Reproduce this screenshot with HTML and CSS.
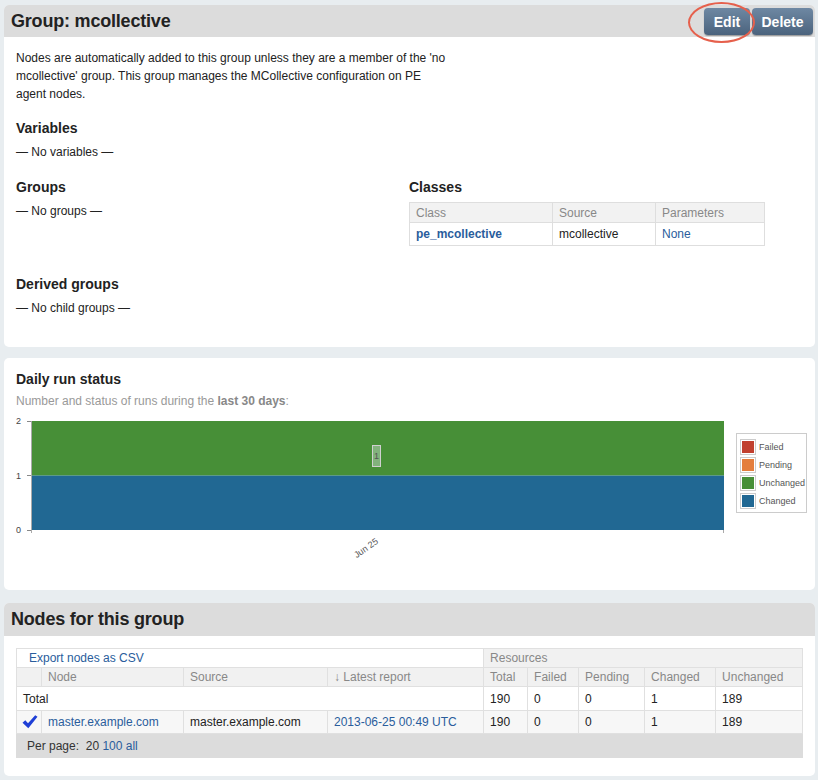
FILE: index.html
```html
<!DOCTYPE html>
<html>
<head>
<meta charset="utf-8">
<link rel="stylesheet" href="styles.css">
</head>
<body>
<section class="panel panel-group">
  <header class="panel-head">
    <h1 class="panel-title">Group: mcollective</h1>
    <div class="actions">
      <a class="btn">Edit</a>
      <a class="btn">Delete</a>
    </div>
    <span class="highlight"></span>
  </header>
  <div class="panel-body">
    <p class="desc">Nodes are automatically added to this group unless they are a member of the 'no mcollective' group. This group manages the MCollective configuration on PE agent nodes.</p>
    <h3 class="sec">Variables</h3>
    <p class="empty">— No variables —</p>
    <div class="two-col">
      <div>
        <h3 class="sec">Groups</h3>
        <p class="empty">— No groups —</p>
      </div>
      <div>
        <h3 class="sec">Classes</h3>
        <table class="classes">
          <colgroup><col class="c1"><col class="c2"><col class="c3"></colgroup>
          <thead><tr><th>Class</th><th>Source</th><th>Parameters</th></tr></thead>
          <tbody><tr><td><a class="link strong">pe_mcollective</a></td><td>mcollective</td><td><a class="link">None</a></td></tr></tbody>
        </table>
      </div>
    </div>
    <h3 class="sec derived">Derived groups</h3>
    <p class="empty">— No child groups —</p>
  </div>
</section>

<section class="panel panel-chart">
  <div class="panel-body chart-body">
    <h3 class="sec first">Daily run status</h3>
    <p class="sub">Number and status of runs during the <b>last 30 days</b>:</p>
    <svg class="chart" width="795" height="170" viewBox="0 0 795 170">
      <rect x="15" y="9" width="693" height="54.5" fill="#478f37"/>
      <rect x="15" y="63.5" width="693" height="54.5" fill="#216893"/>
      <line x1="15" y1="63.5" x2="708" y2="63.5" stroke="#5d9a88" stroke-width="1"/>
      <line x1="15.5" y1="9" x2="15.5" y2="121" stroke="#aaa" stroke-width="1"/>
      <line x1="707.5" y1="118" x2="707.5" y2="121" stroke="#aaa" stroke-width="1"/>
      <line x1="11" y1="9.5" x2="15" y2="9.5" stroke="#888"/>
      <line x1="11" y1="63.5" x2="15" y2="63.5" stroke="#888"/>
      <line x1="11" y1="118.5" x2="15" y2="118.5" stroke="#888"/>
      <text class="ylab" x="5" y="12" text-anchor="end">2</text>
      <text class="ylab" x="5" y="67" text-anchor="end">1</text>
      <text class="ylab" x="5" y="121" text-anchor="end">0</text>
      <rect x="356.5" y="33.5" width="8" height="21" fill="#82b27c" stroke="#d0d0d0" stroke-width="1"/>
      <text class="tip" x="360.5" y="47" text-anchor="middle">1</text>
      <text class="xlab" x="350" y="139" text-anchor="middle" transform="rotate(-35 350 136)">Jun 25</text>
      <rect x="720.5" y="21.5" width="70" height="79" fill="#fff" stroke="#ccc" stroke-width="1"/>
      <rect x="724.5" y="27.5" width="15" height="15" fill="#fff" stroke="#ccc"/>
      <rect x="726" y="29" width="12" height="12" fill="#c1402f"/>
      <text class="leg" x="743" y="38">Failed</text>
      <rect x="724.5" y="45.5" width="15" height="15" fill="#fff" stroke="#ccc"/>
      <rect x="726" y="47" width="12" height="12" fill="#e47e3d"/>
      <text class="leg" x="743" y="56">Pending</text>
      <rect x="724.5" y="63.5" width="15" height="15" fill="#fff" stroke="#ccc"/>
      <rect x="726" y="65" width="12" height="12" fill="#478f37"/>
      <text class="leg" x="743" y="74">Unchanged</text>
      <rect x="724.5" y="81.5" width="15" height="15" fill="#fff" stroke="#ccc"/>
      <rect x="726" y="83" width="12" height="12" fill="#216893"/>
      <text class="leg" x="743" y="92">Changed</text>
    </svg>
  </div>
</section>

<section class="panel panel-nodes">
  <header class="panel-head">
    <h1 class="panel-title">Nodes for this group</h1>
  </header>
  <div class="panel-body nodes-body">
    <table class="nodes">
      <colgroup>
        <col class="n-chk"><col class="n-node"><col class="n-src"><col class="n-rep">
        <col class="n-tot"><col class="n-fail"><col class="n-pend"><col class="n-chg"><col class="n-unch">
      </colgroup>
      <thead>
        <tr class="r-top">
          <th colspan="4" class="export"><a class="link">Export nodes as CSV</a></th>
          <th colspan="5" class="res">Resources</th>
        </tr>
        <tr class="r-head">
          <th></th><th>Node</th><th>Source</th><th>↓ Latest report</th>
          <th>Total</th><th>Failed</th><th>Pending</th><th>Changed</th><th>Unchanged</th>
        </tr>
      </thead>
      <tbody>
        <tr class="r-total">
          <td colspan="4" class="total">Total</td>
          <td>190</td><td>0</td><td>0</td><td>1</td><td>189</td>
        </tr>
        <tr class="r-node">
          <td class="chk"><svg width="16" height="14" viewBox="0 0 16 14"><path d="M0.5 7.8 L3.3 5.2 L6 8.2 L13.2 0.3 L15.5 1.8 L6.3 13.2 Z" fill="#1f3fd6"/></svg></td>
          <td><a class="link">master.example.com</a></td>
          <td>master.example.com</td>
          <td><a class="link">2013-06-25 00:49 UTC</a></td>
          <td>190</td><td>0</td><td>0</td><td>1</td><td>189</td>
        </tr>
      </tbody>
      <tfoot>
        <tr class="r-foot">
          <td colspan="9">Per page:&nbsp; 20 <a class="link">100</a> <a class="link">all</a></td>
        </tr>
      </tfoot>
    </table>
  </div>
</section>
</body>
</html>
```

FILE: styles.css
```css
* { box-sizing: border-box; }

body {
  margin: 0;
  padding: 5px 3px 0 4px;
  background: #e8edf0;
  font-family: "Liberation Sans", Arial, Helvetica, sans-serif;
  font-size: 12px;
  color: #2b2b2b;
}

.panel {
  position: relative;
  background: #fff;
  border-radius: 5px;
  width: 811px;
}

.panel-group { height: 342px; }
.panel-chart { margin-top: 11px; height: 232px; }
.panel-nodes { margin-top: 13px; height: 173px; }

.panel-head {
  position: relative;
  display: flex;
  align-items: center;
  justify-content: space-between;
  height: 32px;
  padding: 0 2px 0 7px;
  background: #dcdcdc;
  border-radius: 5px 5px 0 0;
}

.panel-nodes .panel-head { height: 33px; }

.panel-title {
  margin: 0;
  font-size: 18px;
  font-weight: bold;
  color: #222;
  letter-spacing: -0.2px;
}

.actions {
  display: flex;
  gap: 2px;
  align-self: flex-start;
  margin-top: 3px;
}

.btn {
  display: inline-flex;
  align-items: center;
  justify-content: center;
  height: 27px;
  padding: 0 8px;
  border-radius: 4px;
  background: linear-gradient(#6e88a3, #4b637d);
  color: #fff;
  font-size: 14px;
  font-weight: bold;
  box-shadow: 0 1px 1px rgba(0,0,0,0.3);
}

.actions .btn:first-child { width: 46px; }
.actions .btn:last-child { width: 61px; }

.highlight {
  position: absolute;
  left: 684px;
  top: -3px;
  width: 67px;
  height: 41px;
  border: 2px solid #e6604c;
  border-radius: 50%;
}

.panel-body { padding: 12px 12px 0 12px; }

.desc {
  margin: 0;
  width: 432px;
  line-height: 18px;
  color: #222;
}

.sec {
  margin: 16px 0 0;
  font-size: 14px;
  line-height: 18px;
  font-weight: bold;
  color: #222;
}

.sec.first { margin-top: 0; }
.sec.derived { margin-top: 29px; }

.empty {
  margin: 6px 0 0;
  line-height: 18px;
  color: #222;
}

.two-col {
  display: grid;
  grid-template-columns: 393px 355px;
  margin-top: 1px;
}

.classes {
  margin-top: 6px;
  width: 355px;
  border-collapse: collapse;
  table-layout: fixed;
}

.classes .c1 { width: 143px; }
.classes .c2 { width: 103px; }
.classes .c3 { width: 109px; }

.classes th {
  height: 20px;
  padding: 0 6px;
  text-align: left;
  font-weight: normal;
  color: #888;
  background: #f2f2f2;
  border: 1px solid #dedede;
}

.classes td {
  height: 23px;
  padding: 0 6px;
  border: 1px solid #dedede;
  color: #222;
}

.link { color: #2a5d9c; text-decoration: none; }
.strong { font-weight: bold; }

.chart-body { padding-top: 12px; }

.sub {
  margin: 4px 0 0;
  line-height: 18px;
  color: #999;
}

.sub b { color: #888; }

.chart { display: block; margin-top: 2px; }

.ylab { font-size: 9px; fill: #444; font-family: "Liberation Sans", Arial, sans-serif; }
.tip { font-size: 9px; fill: #555; font-family: "Liberation Sans", Arial, sans-serif; }
.xlab { font-size: 9px; fill: #555; font-family: "Liberation Sans", Arial, sans-serif; }
.leg { font-size: 9px; fill: #555; font-family: "Liberation Sans", Arial, sans-serif; }

.nodes-body { padding: 12px 13px 0 12px; }

.nodes {
  width: 786px;
  border-collapse: collapse;
  table-layout: fixed;
}

.n-chk { width: 25px; }
.n-node { width: 142px; }
.n-src { width: 144px; }
.n-rep { width: 156px; }
.n-tot { width: 44px; }
.n-fail { width: 51px; }
.n-pend { width: 66px; }
.n-chg { width: 71px; }
.n-unch { width: 87px; }

.nodes th,
.nodes td {
  padding: 0 6px;
  text-align: left;
  white-space: nowrap;
  border: 1px solid #e0e0e0;
}

.nodes th {
  font-weight: normal;
  color: #888;
  background: #f1f1f1;
}

.r-top th { height: 19px; }
.r-top .export { background: #fff; padding-left: 12px; }
.r-head th { height: 19px; }

.nodes td { color: #222; }
.r-total td { height: 24px; background: #fff; }
.r-total .total { padding-left: 6px; }
.r-node td { height: 23px; background: #f7f7f7; }
.r-node .chk { padding: 0 0 0 5px; }
.r-node .chk svg { display: block; }

.r-foot td {
  height: 24px;
  background: #dcdcdc;
  padding-left: 10px;
  color: #333;
  border-color: #dcdcdc;
}
```
